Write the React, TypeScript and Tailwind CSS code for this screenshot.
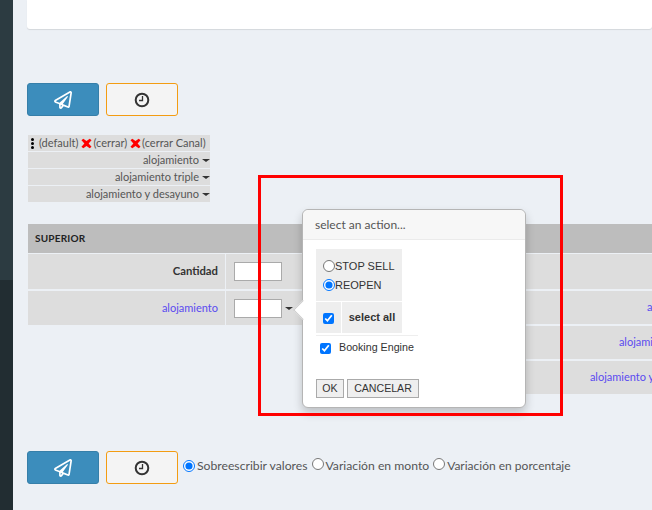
import React from "react";
import { FaRegPaperPlane } from "react-icons/fa";

const sans = "font-['Lato',sans-serif]";

function Clock() {
  return (
    <svg width="16" height="16" viewBox="0 0 16 16" fill="none" stroke="#333">
      <circle cx="8" cy="8" r="6.3" strokeWidth="2" />
      <path d="M8.5 4v4.5H5" strokeWidth="1.3" />
    </svg>
  );
}

function Buttons() {
  return (
    <>
      <button className="flex h-[33px] w-[72px] items-center justify-center rounded-[3px] border border-[#367fa9] bg-[#3c8dbc]">
        <FaRegPaperPlane size={18} color="#fff" />
      </button>
      <button className="flex h-[33px] w-[72px] items-center justify-center rounded-[3px] border border-[#f39c12] bg-[#f4f4f4]">
        <Clock />
      </button>
    </>
  );
}

function Caret() {
  return <span className="ml-[3px] inline-block h-0 w-0 border-x-[4px] border-t-[3px] border-x-transparent border-t-[#333] align-middle" />;
}

function X() {
  return (
    <svg width="11" height="11" viewBox="0 0 12 12" className="block">
      <path d="M0.5 2.5 L2.5 0.8 L6 3.2 L9.5 0.8 L11.5 2.5 L8.3 6 L11.5 9.5 L9.5 11.2 L6 8.6 L2.5 11.2 L0.5 9.5 L3.7 6 Z" fill="#f00" />
    </svg>
  );
}

function Radio({ checked }: { checked?: boolean }) {
  return <input type="radio" readOnly checked={!!checked} className="m-0 h-[12px] w-[12px] shrink-0 [appearance:auto]" />;
}

function Check() {
  return <input type="checkbox" readOnly checked className="m-0 h-[11px] w-[11px] [appearance:auto]" />;
}

const rightRows = ["", "alojamiento", "alojamiento triple", "alojamiento y desayuno"];

export default function App() {
  return (
    <div className={`relative flex h-[510px] w-[652px] overflow-hidden bg-[#ecf0f5] text-[#444] ${sans}`}>
      <aside className="flex w-[13px] shrink-0 flex-col">
        <div className="h-[280px] bg-[#2c3b41]" />
        <div className="flex-1 bg-[#222d32]" />
      </aside>

      <main className="min-w-0 flex-1 pl-[14px]">
        <div className="h-[29px] rounded-b-[3px] bg-white shadow-[0_1px_1px_rgba(0,0,0,0.1)]" />

        <div className="mt-[54px] flex gap-[7px]">
          <Buttons />
        </div>

        <div className="mt-[19px] ml-[1px] flex w-[182px] flex-col gap-[1px] whitespace-nowrap text-[11px] leading-[16px] text-[#555]">
          <div className="flex h-[16px] items-center bg-[#dddddd] pl-[3px]">
            <span className="mr-[5px] flex w-[3px] flex-col gap-[1px]">
              <i className="h-[3px] w-[3px] rounded-full bg-black" />
              <i className="h-[3px] w-[3px] rounded-full bg-black" />
              <i className="h-[3px] w-[3px] rounded-full bg-black" />
            </span>
            <span>(default)</span>
            <span className="ml-[3px] mr-[1px]"><X /></span>
            <span>(cerrar)</span>
            <span className="ml-[3px] mr-[1px]"><X /></span>
            <span>(cerrar Canal)</span>
          </div>
          {["alojamiento", "alojamiento triple", "alojamiento y desayuno"].map((t) => (
            <div key={t} className="flex h-[16px] items-center justify-end bg-[#dddddd]">
              {t}
              <Caret />
            </div>
          ))}
        </div>

        <div className="mt-[22px] ml-[1px] w-[700px]">
          <div className="flex h-[29px] items-center bg-[#bdbdbd] pl-[7px] text-[10px] font-bold tracking-[0.2px] text-[#222]">SUPERIOR</div>
          <div className="mt-[1px] flex">
            <div className="flex w-[370px] flex-col gap-[2px]">
              <div className="flex h-[35px] gap-[1px]">
                <div className="flex w-[197px] items-center justify-end bg-[#dddddd] pr-[7px] text-[11.3px] font-bold text-[#333]">Cantidad</div>
                <div className="flex flex-1 items-center bg-[#dddddd] pl-[8px]">
                  <input readOnly className="h-[19px] w-[48px] border border-[#aaa] bg-white" />
                </div>
              </div>
              <div className="flex h-[34px] gap-[1px]">
                <div className="flex w-[197px] items-center justify-end bg-[#dddddd] pr-[7px] text-[11px] text-[#5a4bf0]">alojamiento</div>
                <div className="flex flex-1 items-center bg-[#dddddd] pl-[8px]">
                  <input readOnly className="h-[19px] w-[48px] border border-[#aaa] bg-white" />
                  <Caret />
                </div>
              </div>
            </div>
            <div className="flex flex-1 flex-col gap-[2px]">
              {rightRows.map((t, i) => (
                <div key={i} className={`flex items-center justify-end bg-[#dddddd] pr-[25px] text-[11px] text-[#5a4bf0] ${i === 0 ? "h-[35px]" : "h-[33px]"}`}>
                  {t}
                </div>
              ))}
            </div>
          </div>
        </div>

        <div className="mt-[57px] flex items-center gap-[7px]">
          <Buttons />
          <div className="-ml-[2px] mb-[3px] flex items-center whitespace-nowrap text-[12.2px] text-[#555]">
            <Radio checked />
            <span className="ml-[2px]">Sobreescribir valores</span>
            <span className="ml-[5px]"><Radio /></span>
            <span className="ml-[1px]">Variación en monto</span>
            <span className="ml-[4px]"><Radio /></span>
            <span className="ml-[2px] text-[12px]">Variación en porcentaje</span>
          </div>
        </div>
      </main>

      {/* popover */}
      <div className="absolute left-[302px] top-[209px] z-10 h-[199px] w-[224px] rounded-[6px] border border-[#b5b5b5] bg-white font-['Liberation_Sans',sans-serif] shadow-[0_5px_10px_rgba(0,0,0,0.2)]">
        <span className="absolute left-[-7px] top-[93px] h-[14px] w-[14px] rotate-45 border-b border-l border-[#ccc] bg-white" />
        <div className={`relative flex h-[30px] items-center rounded-t-[6px] border-b border-[#ebebeb] bg-[#f7f7f7] pl-[12px] text-[12px] text-[#555] ${sans}`}>
          select an action...
        </div>
        <div className="relative pl-[13px] pt-[9px] text-[#333]">
          <div className="flex h-[52px] w-[86px] flex-col gap-[7px] bg-[#eeeeee] pl-[7px] pt-[11px] text-[11px]">
            <label className="flex h-[12px] items-center"><Radio />STOP SELL</label>
            <label className="flex h-[12px] items-center"><Radio checked />REOPEN</label>
          </div>
          <div className="mt-[1px] flex h-[31px] w-[86px] gap-[1px]">
            <div className="flex w-[25px] items-start justify-center bg-[#eeeeee] pt-[11px]"><Check /></div>
            <div className="flex flex-1 items-center justify-center bg-[#eeeeee] text-[11px] font-bold">select all</div>
          </div>
          <div className="mt-[2px] flex h-[26px] w-[102px] items-center border-t border-[#eee] pl-[4px] text-[10.7px]">
            <Check />
            <span className="ml-[8px] -translate-y-[1px]">Booking Engine</span>
          </div>
          <div className="mt-[18px] flex gap-[3px] text-[10.6px] text-[#333]">
            <button className="h-[19px] w-[28px] border border-[#aaa] bg-[#efefef]">OK</button>
            <button className="h-[19px] w-[72px] border border-[#aaa] bg-[#efefef]">CANCELAR</button>
          </div>
        </div>
      </div>

      {/* annotation */}
      <div className="pointer-events-none absolute left-[258px] top-[175px] z-20 h-[241px] w-[305px] border-[3px] border-[#f00]" />
    </div>
  );
}
